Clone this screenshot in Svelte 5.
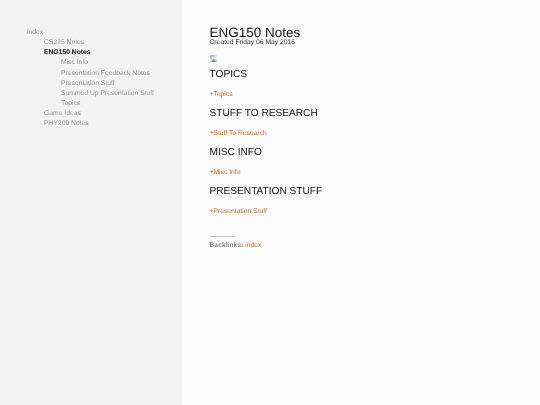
<script>
  const tree = [
    { label: 'CS225 Notes' },
    { label: 'ENG150 Notes', active: true, children: ['Misc Info', 'Presentation Feedback Notes', 'Presentation Stuff', 'Summed Up Presentation Stuff', 'Topics'] },
    { label: 'Game Ideas' },
    { label: 'PHY200 Notes' }
  ];
  const sections = [
    ['TOPICS', '+Topics'],
    ['STUFF TO RESEARCH', '+Stuff To Research'],
    ['MISC INFO', '+Misc Info'],
    ['PRESENTATION STUFF', '+Presentation Stuff']
  ];
</script>

<div class="page">
  <nav class="side">
    <a class="link" href="#index">index</a>
    <ul>
      {#each tree as item}
        <li>
          <a class="link" class:active={item.active} href="#n">{item.label}</a>
          {#if item.children}
            <ul>
              {#each item.children as child}
                <li><a class="link" href="#n">{child}</a></li>
              {/each}
            </ul>
          {/if}
        </li>
      {/each}
    </ul>
  </nav>
  <main class="main">
    <h1>ENG150 Notes</h1>
    <div class="meta">Created Friday 06 May 2016</div>
    <svg class="broken" width="7" height="7" viewBox="0 0 7 7" aria-hidden="true">
      <rect width="7" height="7" fill="#e4e9ee" />
      <path d="M0 0h5v2H2v2H0z" fill="#b4c6dc" />
      <path d="M1 7l2-3 2 1 2 2z" fill="#7da36b" />
    </svg>
    {#each sections as [title, link]}
      <section>
        <h2>{title}</h2>
        <p><a href="#s">{link}</a></p>
      </section>
    {/each}
    <hr />
    <div class="back"><b>Backlinks:</b> <a href="#index">index</a></div>
  </main>
</div>

<style>
  :global(body) { margin: 0; }
  .page {
    display: flex;
    height: 405px;
    overflow: hidden;
    font-family: "Liberation Sans", Arial, sans-serif;
    text-rendering: geometricPrecision;
    background: #fcfcfc;
    filter: blur(0.3px);
  }
  .side {
    width: 182px;
    flex: none;
    box-sizing: border-box;
    background: #f3f3f3;
    padding: 28px 0 0 27px;
    font-size: 6.75px;
    line-height: 10.15px;
  }
  ul { list-style: none; margin: 0; padding: 0 0 0 17px; }
  .link { color: #999; text-decoration: none; display: block; }
  .link.active { color: #111; font-weight: bold; }
  .main { flex: 1; padding: 26px 0 0 27.5px; color: #111; }
  h1 { font-size: 13.5px; font-weight: normal; line-height: 14px; margin: 0; }
  .meta { font-size: 6.75px; line-height: 7px; color: #333; margin-top: -1.5px; }
  .broken { display: block; margin-top: 9px; }
  section { height: 39px; }
  h2 { font-size: 10.15px; font-weight: normal; line-height: 13px; margin: 0; }
  .broken + section { margin-top: 6.5px; }
  p { font-size: 6.75px; line-height: 9px; margin: 9px 0 0; }
  a { color: #d2691e; text-decoration: none; }
  hr { width: 24px; height: 1px; border: 0; background: #ccc; margin: 12px 0 0; }
  .back { font-size: 6.75px; line-height: 10px; color: #888; margin-top: 4px; }
</style>
